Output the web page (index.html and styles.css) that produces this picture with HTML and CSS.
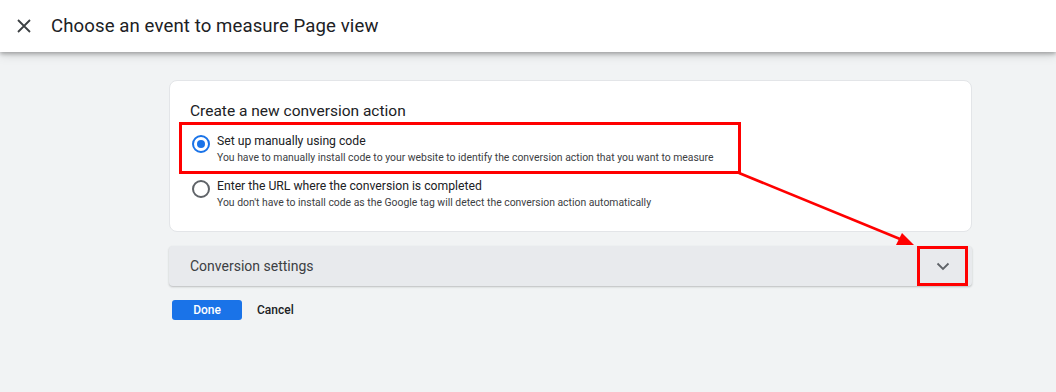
FILE: index.html
```html
<!DOCTYPE html>
<html lang="en">
<head>
    <meta charset="UTF-8">
    <meta name="viewport" content="width=device-width, initial-scale=1.0">
    <title>Choose an event to measure Page view</title>
    <link rel="stylesheet" href="styles.css">
</head>
<body>
    <header class="topbar">
        <button class="close-btn" aria-label="Close">
            <svg width="14" height="14" viewBox="0 0 14 14"><path d="M1 1L13 13M13 1L1 13" stroke="#3c4043" stroke-width="1.8" fill="none"/></svg>
        </button>
        <h1>Choose an event to measure Page view</h1>
    </header>

    <main class="content">
        <section class="card">
            <h2>Create a new conversion action</h2>
            <label class="option highlighted">
                <span class="radio checked"></span>
                <span class="option-text">
                    <span class="option-title">Set up manually using code</span>
                    <span class="option-desc">You have to manually install code to your website to identify the conversion action that you want to measure</span>
                </span>
            </label>
            <label class="option">
                <span class="radio"></span>
                <span class="option-text">
                    <span class="option-title">Enter the URL where the conversion is completed</span>
                    <span class="option-desc">You don't have to install code as the Google tag will detect the conversion action automatically</span>
                </span>
            </label>
        </section>

        <section class="panel">
            <span class="panel-title">Conversion settings</span>
            <span class="expand highlighted">
                <svg width="14" height="9" viewBox="0 0 14 9"><path d="M1.5 1.5L7 7L12.5 1.5" stroke="#5f6368" stroke-width="1.8" fill="none"/></svg>
            </span>
        </section>

        <div class="actions">
            <button class="btn-primary">Done</button>
            <button class="btn-text">Cancel</button>
        </div>
    </main>

    <!-- annotation arrow -->
    <svg class="annotation" width="1056" height="392" viewBox="0 0 1056 392">
        <line x1="739" y1="173" x2="900" y2="239" stroke="#ff0000" stroke-width="2.6"/>
        <polygon points="914,245 896,245 902,233" fill="#ff0000"/>
    </svg>
</body>
</html>
```

FILE: styles.css
```css
body {
    font-family: Roboto, "Noto Sans", Arial, sans-serif;
    background: #f1f3f4;
    color: #3c4043;
    margin: 0;
    padding: 0;
    position: relative;
    height: 392px;
    overflow: hidden;
}

.topbar {
    height: 52px;
    background: #ffffff;
    display: flex;
    align-items: center;
    box-shadow: 0 2px 4px rgba(0, 0, 0, 0.28), 0 4px 10px rgba(0, 0, 0, 0.1);
    position: relative;
    z-index: 1;
}

.close-btn {
    background: none;
    border: none;
    padding: 0;
    margin: 0 0 0 17px;
    width: 14px;
    height: 14px;
    display: flex;
}

.topbar h1 {
    margin: 0 0 0 20px;
    font-size: 18.6px;
    font-weight: 400;
    color: #202124;
    letter-spacing: 0.1px;
}

.content {
    padding: 28px 0 0 169px;
    width: 803px;
}

.card {
    background: #ffffff;
    border: 1px solid #e3e5e8;
    border-radius: 8px;
    padding: 20px 20px 18px 20px;
    height: 112px;
}

.card h2 {
    margin: 0 0 2px 0;
    font-size: 15.5px;
    font-weight: 400;
    color: #202124;
    line-height: 20px;
}

.option {
    display: flex;
    align-items: flex-start;
    padding: 5px 0 4px 12px;
    margin-left: -10px;
    width: 560px;
    box-sizing: border-box;
}

.option.highlighted {
    outline: 3px solid #ff0000;
    outline-offset: -2px;
    height: 50px;
    padding-top: 10px;
}

.radio {
    width: 14px;
    height: 14px;
    border: 2px solid #5f6368;
    border-radius: 50%;
    flex-shrink: 0;
    margin-right: 7px;
    margin-top: 2px;
    position: relative;
}

.radio.checked {
    border-color: #1a73e8;
}

.radio.checked::after {
    content: "";
    position: absolute;
    left: 3px;
    top: 3px;
    width: 8px;
    height: 8px;
    border-radius: 50%;
    background: #1a73e8;
}

.option-text {
    display: flex;
    flex-direction: column;
    white-space: nowrap;
}

.option-title {
    font-size: 12.2px;
    line-height: 17px;
    color: #202124;
}

.option-desc {
    font-size: 10.4px;
    line-height: 15px;
    color: #3c4043;
}

.panel {
    margin-top: 14px;
    height: 40px;
    background: #e8eaed;
    border-radius: 4px;
    box-shadow: 0 1px 2px rgba(60, 64, 67, 0.3);
    display: flex;
    align-items: center;
    justify-content: space-between;
    padding-left: 21px;
}

.panel-title {
    font-size: 14px;
    color: #3c4043;
}

.expand {
    width: 51px;
    height: 40px;
    margin-right: 4px;
    box-sizing: border-box;
    display: flex;
    align-items: center;
    justify-content: center;
}

.expand.highlighted {
    border: 3px solid #ff0000;
}

.actions {
    display: flex;
    align-items: center;
    margin-top: 14px;
    padding-left: 3px;
}

.btn-primary {
    background: #1a73e8;
    color: #ffffff;
    border: none;
    border-radius: 3px;
    width: 70px;
    height: 20px;
    font-family: inherit;
    font-size: 12px;
    font-weight: 500;
    padding: 0;
}

.btn-text {
    background: none;
    border: none;
    color: #202124;
    font-family: inherit;
    font-size: 12px;
    font-weight: 500;
    margin-left: 15px;
    padding: 0;
}

.annotation {
    position: absolute;
    left: 0;
    top: 0;
    pointer-events: none;
}
```
